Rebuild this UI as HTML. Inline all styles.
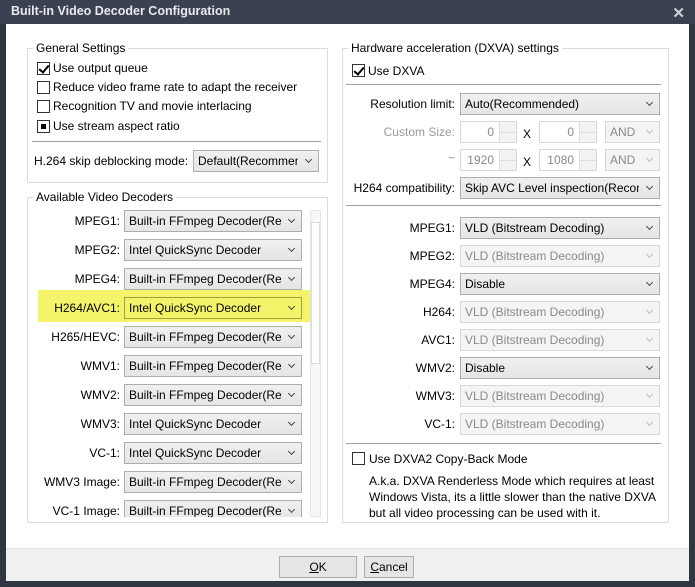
<!DOCTYPE html>
<html><head><meta charset="utf-8"><style>
*{box-sizing:border-box;margin:0;padding:0}
body{width:695px;height:587px;background:#2f3541;font-family:"Liberation Sans",sans-serif;font-size:12px;color:#000;position:relative;overflow:hidden}
.a{position:absolute}
#title{left:0;top:0;width:695px;height:24px;background:#3a4150;color:#e8eaee;font-weight:bold;font-size:12.5px;padding:4px 0 0 11px}
#client{left:6px;top:24px;width:683px;height:557px;background:#fff}
#foot{left:6px;top:548px;width:683px;height:33px;background:#f0f0f0;border-top:1px solid #dfdfdf}
.grp{position:absolute;border:1px solid #dcdcdc}
.gl{position:absolute;background:#fff;padding:0 3px;top:-8px;left:5px;white-space:nowrap}
.cb{position:absolute;width:13px;height:13px;border:1px solid #333;background:#fff}
.chk::after{content:"";position:absolute;left:3px;top:0px;width:4px;height:8px;border:solid #000;border-width:0 2px 2px 0;transform:rotate(40deg)}
.sq::after{content:"";position:absolute;left:3px;top:3px;width:5px;height:5px;background:#000}
.t{position:absolute;white-space:nowrap}
.cmb{position:absolute;height:22px;border:1px solid #adadad;background:linear-gradient(#f0f0f0,#e5e5e5);padding:3px 0 0 4px;white-space:nowrap;overflow:hidden}
.cmb span{display:block;overflow:hidden;margin-right:20px}
.cmb::after{content:"";position:absolute;right:7px;top:6px;width:4px;height:4px;border:solid #444;border-width:0 1.5px 1.5px 0;transform:rotate(45deg)}
.dis{background:#f4f4f4;border-color:#d9d9d9;color:#8a8a8a}
.dis::after{border-color:#bbb}
.hl{background:transparent;border-color:#a0a040}
.lb{position:absolute;text-align:right;white-space:nowrap}
.sep{position:absolute;height:1px;background:#a0a0a0}
.spin{position:absolute;height:22px;border:1px solid #d9d9d9;background:#fff;color:#888;text-align:right;padding:3px 22px 0 0}
.spin::after{content:"";position:absolute;right:0;top:0;width:16px;height:20px;border-left:1px solid #ddd;background:linear-gradient(#f2f2f2 49%,#ccc 50%,#f2f2f2 55%)}
.btn{position:absolute;height:22px;border:1px solid #adadad;background:#e5e5e5;text-align:center;padding-top:3px}
</style></head><body>
<div id="title" class="a">Built-in Video Decoder Configuration</div>
<div class="a" style="right:10px;top:4px;color:#d0d3d8;font-size:15px;font-weight:bold">✕</div>
<div id="client" class="a"></div>
<div id="foot" class="a"></div>

<div class="grp" style="left:27px;top:48px;width:301px;height:135px"><div class="gl">General Settings</div></div>
<div class="cb chk" style="left:37px;top:62px"></div><div class="t" style="left:53px;top:61px">Use output queue</div>
<div class="cb" style="left:37px;top:81px"></div><div class="t" style="left:53px;top:80px">Reduce video frame rate to adapt the receiver</div>
<div class="cb" style="left:37px;top:100px"></div><div class="t" style="left:53px;top:99px">Recognition TV and movie interlacing</div>
<div class="cb sq" style="left:37px;top:120px"></div><div class="t" style="left:53px;top:119px">Use stream aspect ratio</div>
<div class="sep" style="left:32px;top:141px;width:289px"></div>
<div class="t" style="left:34px;top:154px">H.264 skip deblocking mode:</div>
<div class="cmb" style="left:193px;top:150px;width:126px"><span>Default(Recommen</span></div>

<div class="grp" style="left:27px;top:197px;width:301px;height:326px"><div class="gl">Available Video Decoders</div></div>
<div class="a" style="left:38px;top:290px;width:273px;height:32px;background:#f3f46a"></div>
<div class="a" style="left:310px;top:210px;width:11px;height:307px;border:1px solid #e6e6e6;background:#f7f7f7"></div>
<div class="a" style="left:311px;top:222px;width:9px;height:142px;background:#fff;border:1px solid #ddd"></div>
<div class="lb" style="right:575px;top:214px">MPEG1:</div><div class="cmb" style="left:124px;top:210px;width:178px"><span>Built-in FFmpeg Decoder(Rec</span></div>
<div class="lb" style="right:575px;top:243px">MPEG2:</div><div class="cmb" style="left:124px;top:239px;width:178px"><span>Intel QuickSync Decoder</span></div>
<div class="lb" style="right:575px;top:272px">MPEG4:</div><div class="cmb" style="left:124px;top:268px;width:178px"><span>Built-in FFmpeg Decoder(Rec</span></div>
<div class="lb" style="right:575px;top:301px">H264/AVC1:</div><div class="cmb hl" style="left:124px;top:297px;width:178px"><span>Intel QuickSync Decoder</span></div>
<div class="lb" style="right:575px;top:330px">H265/HEVC:</div><div class="cmb" style="left:124px;top:326px;width:178px"><span>Built-in FFmpeg Decoder(Rec</span></div>
<div class="lb" style="right:575px;top:359px">WMV1:</div><div class="cmb" style="left:124px;top:355px;width:178px"><span>Built-in FFmpeg Decoder(Rec</span></div>
<div class="lb" style="right:575px;top:388px">WMV2:</div><div class="cmb" style="left:124px;top:384px;width:178px"><span>Built-in FFmpeg Decoder(Rec</span></div>
<div class="lb" style="right:575px;top:417px">WMV3:</div><div class="cmb" style="left:124px;top:413px;width:178px"><span>Intel QuickSync Decoder</span></div>
<div class="lb" style="right:575px;top:446px">VC-1:</div><div class="cmb" style="left:124px;top:442px;width:178px"><span>Intel QuickSync Decoder</span></div>
<div class="lb" style="right:575px;top:475px">WMV3 Image:</div><div class="cmb" style="left:124px;top:471px;width:178px"><span>Built-in FFmpeg Decoder(Rec</span></div>
<div class="a" style="left:30px;top:500px;width:280px;height:17px;overflow:hidden">
<div class="lb" style="right:190px;top:4px">VC-1 Image:</div><div class="cmb" style="left:94px;top:0px;width:178px"><span>Built-in FFmpeg Decoder(Rec</span></div></div>

<div class="grp" style="left:342px;top:48px;width:327px;height:475px"><div class="gl">Hardware acceleration (DXVA) settings</div></div>
<div class="cb chk" style="left:352px;top:64px"></div><div class="t" style="left:368px;top:64px">Use DXVA</div>
<div class="sep" style="left:346px;top:84px;width:315px"></div>
<div class="lb" style="right:240px;top:97px">Resolution limit:</div><div class="cmb" style="left:460px;top:93px;width:200px"><span>Auto(Recommended)</span></div>
<div class="lb" style="right:240px;top:125px;color:#999">Custom Size:</div>
<div class="spin" style="left:460px;top:121px;width:57px">0</div><div class="t" style="left:523px;top:127px">X</div>
<div class="spin" style="left:539px;top:121px;width:58px">0</div>
<div class="cmb dis" style="left:605px;top:121px;width:55px"><span>AND</span></div>
<div class="lb" style="right:240px;top:151px;color:#999">~</div>
<div class="spin" style="left:460px;top:149px;width:57px">1920</div><div class="t" style="left:523px;top:155px">X</div>
<div class="spin" style="left:539px;top:149px;width:58px">1080</div>
<div class="cmb dis" style="left:605px;top:149px;width:55px"><span>AND</span></div>
<div class="lb" style="right:240px;top:181px">H264 compatibility:</div><div class="cmb" style="left:460px;top:177px;width:200px"><span>Skip AVC Level inspection(Recom</span></div>
<div class="sep" style="left:346px;top:205px;width:315px"></div>
<div class="lb" style="right:240px;top:221px">MPEG1:</div><div class="cmb" style="left:460px;top:217px;width:200px"><span>VLD (Bitstream Decoding)</span></div>
<div class="lb" style="right:240px;top:249px">MPEG2:</div><div class="cmb dis" style="left:460px;top:245px;width:200px"><span>VLD (Bitstream Decoding)</span></div>
<div class="lb" style="right:240px;top:277px">MPEG4:</div><div class="cmb" style="left:460px;top:273px;width:200px"><span>Disable</span></div>
<div class="lb" style="right:240px;top:305px">H264:</div><div class="cmb dis" style="left:460px;top:301px;width:200px"><span>VLD (Bitstream Decoding)</span></div>
<div class="lb" style="right:240px;top:333px">AVC1:</div><div class="cmb dis" style="left:460px;top:329px;width:200px"><span>VLD (Bitstream Decoding)</span></div>
<div class="lb" style="right:240px;top:361px">WMV2:</div><div class="cmb" style="left:460px;top:357px;width:200px"><span>Disable</span></div>
<div class="lb" style="right:240px;top:389px">WMV3:</div><div class="cmb dis" style="left:460px;top:385px;width:200px"><span>VLD (Bitstream Decoding)</span></div>
<div class="lb" style="right:240px;top:417px">VC-1:</div><div class="cmb dis" style="left:460px;top:413px;width:200px"><span>VLD (Bitstream Decoding)</span></div>
<div class="sep" style="left:346px;top:443px;width:315px"></div>
<div class="cb" style="left:352px;top:452px"></div><div class="t" style="left:369px;top:452px">Use DXVA2 Copy-Back Mode</div>
<div class="t" style="left:369px;top:473px;line-height:16px">A.k.a. DXVA Renderless Mode which requires at least<br>Windows Vista, its a little slower than the native DXVA<br>but all video processing can be used with it.</div>

<div class="btn" style="left:279px;top:556px;width:78px"><u>O</u>K</div>
<div class="btn" style="left:364px;top:556px;width:50px"><u>C</u>ancel</div>
</body></html>
